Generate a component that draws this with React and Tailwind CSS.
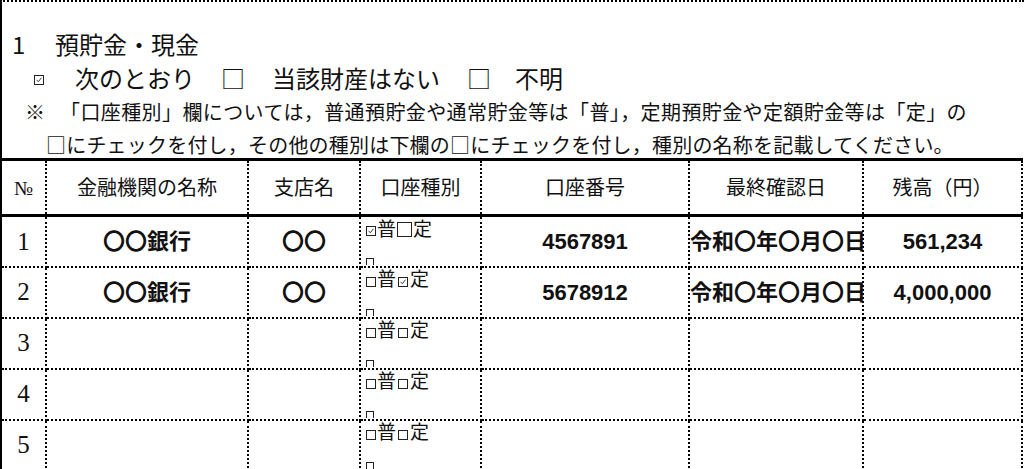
import React from 'react';

const sans = "font-['Noto_Sans_CJK_JP',sans-serif]";
const serif = "font-['Liberation_Serif','Noto_Sans_CJK_JP',serif]";
const bold = "font-['Liberation_Sans','Noto_Sans_CJK_JP',sans-serif] font-bold";

const rows = [
  { no: '1', bank: '〇〇銀行', branch: '〇〇', kind: 'futsu', account: '4567891', date: '令和〇年〇月〇日', balance: '561,234' },
  { no: '2', bank: '〇〇銀行', branch: '〇〇', kind: 'teiki', account: '5678912', date: '令和〇年〇月〇日', balance: '4,000,000' },
  { no: '3' },
  { no: '4' },
  { no: '5' },
];

const headers = ['№', '金融機関の名称', '支店名', '口座種別', '口座番号', '最終確認日', '残高（円）'];

const cell = 'border-2 border-dotted border-black p-0';

// small check box drawn as a box, with a tick when checked
const SmallBox = ({ checked, className = '' }) => (
  <span className={`relative inline-block w-[10px] h-[10px] border border-[#222] bg-white shrink-0 ${className}`}>
    {checked && (
      <svg viewBox="0 0 10 10" className="absolute inset-0 w-full h-full">
        <path d="M2 4.8 L4.2 7.2 L8 2.2" fill="none" stroke="#222" strokeWidth="1.1" />
      </svg>
    )}
  </span>
);

const KindCell = ({ kind }) => (
  <div className="h-[48px] overflow-hidden pl-[5px]">
    <div className={`flex items-center h-[24px] text-[19px] leading-none ${serif}`}>
      {kind === 'futsu' ? (
        <>
          <SmallBox checked className="mt-[4px]" />
          <span className="ml-[1px]">普</span>
          <span className="inline-block w-[15px] h-[15px] border-[1.5px] border-[#222] mx-[1px] mt-[1px]" />
          <span>定</span>
        </>
      ) : (
        <>
          <SmallBox className="mt-[4px]" />
          <span className="ml-[1px]">普</span>
          <SmallBox checked={kind === 'teiki'} className="mt-[4px] mx-[2px]" />
          <span>定</span>
        </>
      )}
    </div>
    <div className="mt-[17px] leading-none flex"><span className="inline-block w-[8px] h-[10px] border border-[#222]" /></div>
  </div>
);

export default function App() {
  return (
    <div className="w-[1024px] h-[469px] overflow-hidden bg-white text-[#111]">
      <div className={`h-[158px] border-t-2 border-l-2 border-dotted [border-left-style:solid] border-black ${sans}`}>
        <div className="flex items-center h-[34px] mt-[25px] text-[24px] leading-none">
          <span className="ml-[10px] w-[43px]">1</span>
          <span>預貯金・現金</span>
        </div>
        <div className="flex items-center h-[34px] text-[24px] leading-none">
          <span className="ml-[32px] w-[41px] flex items-center"><SmallBox checked className="mt-[3px]" /></span>
          <span className="w-[146px]">次のとおり</span>
          <span className="w-[51px]">□</span>
          <span className="w-[195px]">当該財産はない</span>
          <span className="w-[48px]">□</span>
          <span>不明</span>
        </div>
        <div className="flex items-center h-[33px] text-[20px] leading-none">
          <span className="ml-[23px] w-[35px]">※</span>
          <span className="tracking-[0.4px] whitespace-nowrap">「口座種別」欄については，普通預貯金や通常貯金等は「普」，定期預貯金や定額貯金等は「定」の</span>
        </div>
        <div className="flex items-center h-[34px] text-[20px] leading-none">
          <span className="ml-[44px] tracking-[0.2px] whitespace-nowrap">□にチェックを付し，その他の種別は下欄の□にチェックを付し，種別の名称を記載してください。</span>
        </div>
      </div>

      <table className="table-fixed border-collapse w-[1021px]">
        <colgroup>
          <col className="w-[45px]" />
          <col className="w-[202px]" />
          <col className="w-[112px]" />
          <col className="w-[121px]" />
          <col className="w-[208px]" />
          <col className="w-[174px]" />
          <col className="w-[159px]" />
        </colgroup>
        <thead>
          <tr className="h-[56px]">
            {headers.map((h, i) => (
              <th
                key={h}
                className={`${cell} [border-top-style:solid] [border-bottom-style:solid] border-t-[3px] border-b-[3px] ${i === 0 ? '[border-left-style:solid]' : ''} ${serif} font-normal text-[20px] leading-none text-center`}
              >
                {h}
              </th>
            ))}
          </tr>
        </thead>
        <tbody>
          {rows.map((r) => (
            <tr key={r.no} className="h-[51px]">
              <td className={`${cell} [border-left-style:solid] ${serif} text-[25px] text-center`}>{r.no}</td>
              <td className={`${cell} ${bold} text-[22px] text-center`}>{r.bank}</td>
              <td className={`${cell} ${bold} text-[22px] text-center`}>{r.branch}</td>
              <td className={`${cell} align-top`}><KindCell kind={r.kind} /></td>
              <td className={`${cell} ${bold} text-[22px] text-center`}>{r.account}</td>
              <td className={`${cell} ${bold} text-[22px] text-left whitespace-nowrap`}>{r.date}</td>
              <td className={`${cell} ${bold} text-[22px] text-center`}>{r.balance}</td>
            </tr>
          ))}
        </tbody>
      </table>
    </div>
  );
}
